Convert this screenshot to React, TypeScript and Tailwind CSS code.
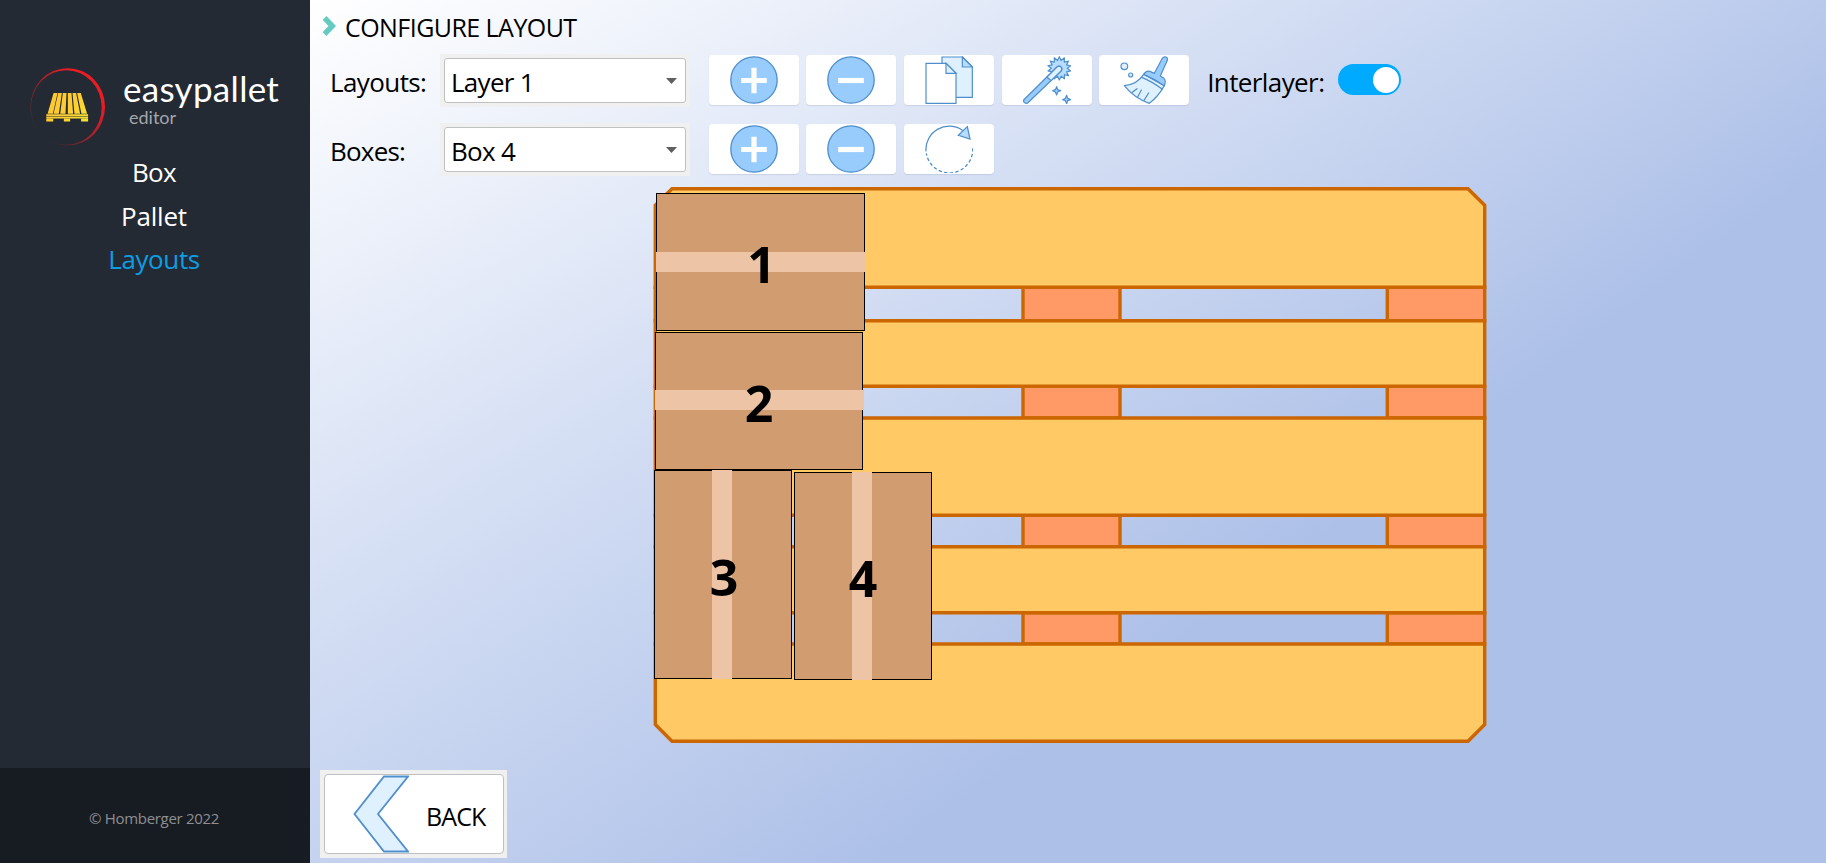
import React from 'react';

const STROKE = '#4f8fcc';

function Logo() {
  return (
    <svg viewBox="86 80 232 238" className="h-[79px] w-[77px] shrink-0" fill="none">
      <defs>
        <linearGradient id="ring" x1="110" y1="290" x2="270" y2="130" gradientUnits="userSpaceOnUse">
          <stop offset="0" stopColor="#ed1c24" stopOpacity="0" />
          <stop offset="0.45" stopColor="#ed1c24" stopOpacity="0.6" />
          <stop offset="0.95" stopColor="#ed1c24" />
        </linearGradient>
        <linearGradient id="wood" x1="150" y1="158" x2="250" y2="244" gradientUnits="userSpaceOnUse">
          <stop offset="0" stopColor="#fdc92f" />
          <stop offset="0.5" stopColor="#fdcb33" />
          <stop offset="1" stopColor="#fbe030" />
        </linearGradient>
      </defs>
      <path
        fill="url(#ring)"
        fillRule="evenodd"
        d="M90 200A112 116 0 1 1 315 200A112 116 0 1 1 90 200ZM92 202A106 112 0 1 1 305 202A106 112 0 1 1 92 202Z"
      />
      <g fill="url(#wood)">
        <path d="M160 158H172L158 221H142ZM174 158H185L176 221H160ZM188 158H199L196 221H180ZM203 158H214L219 221H203ZM217 158H228L240 221H223ZM231 158H242L261 221H244Z" />
        <path d="M138 222H264V228H138ZM138 230H264V235H138ZM138 236H159V244H138ZM191 236H210V244H191ZM243 236H264V244H243Z" />
      </g>
    </svg>
  );
}

function PlusIcon() {
  return (
    <svg viewBox="0 0 48 48" className="size-12">
      <circle cx="24" cy="24" r="23.2" fill="#98ccfd" stroke={STROKE} strokeWidth="1.3" />
      <path d="M24 11.7V37.3M11.2 24.5H36.8" stroke="#fff" strokeWidth="5.2" />
    </svg>
  );
}

function MinusIcon() {
  return (
    <svg viewBox="0 0 48 48" className="size-12">
      <circle cx="24" cy="24" r="23.2" fill="#98ccfd" stroke={STROKE} strokeWidth="1.3" />
      <path d="M11.2 24.5H36.8" stroke="#fff" strokeWidth="5.2" />
    </svg>
  );
}

function CopyIcon() {
  return (
    <svg viewBox="674 49 144 144" className="size-12" stroke={STROKE} strokeWidth="3.6">
      <path d="M725 52H787L816 81V173H725Z" fill="#dff0fe" />
      <path d="M786 52V82H816Z" fill="#b6dcfe" />
      <path d="M677 71H738L767 100V191H677Z" fill="#fff" />
      <path d="M737 71V101H767Z" fill="#dff0fe" />
    </svg>
  );
}

function RotateIcon() {
  return (
    <svg viewBox="674 255 144 144" className="size-12" fill="none" stroke={STROKE} strokeWidth="3.8">
      <path d="M677 334A70 70 0 0 1 788 272" />
      <path d="M817 325A70 70 0 0 1 678 340" strokeDasharray="10 7" />
      <path d="M801 260L809 297L774 286Z" fill="#b6dcfe" />
    </svg>
  );
}

const spikes = Array.from({ length: 28 }, (_, i) => {
  const a = (i * Math.PI) / 14 - Math.PI / 2;
  const r = i % 2 === 0 ? 35 : 24;
  return `${(205 + r * Math.cos(a)).toFixed(1)},${(86 + r * Math.sin(a)).toFixed(1)}`;
}).join(' ');

function WandIcon() {
  return (
    <svg viewBox="96 49 144 144" className="size-12" stroke={STROKE} strokeWidth="3.6" strokeLinejoin="round">
      <polygon points={spikes} fill="#b6dcfe" />
      <path d="M98 181L198 82Q204 77 210 82Q215 88 210 94L110 190Q105 193 101 189Q96 185 98 181Z" fill="#98ccfd" />
      <path d="M168 112L198 82Q204 77 210 82Q215 88 210 94L180 123Z" fill="#dff0fe" />
      <path d="M197 141L200 150L209 153L200 157L197 166L193 157L185 153L193 150Z" fill="#98ccfd" />
      <path d="M227 167L230 176L239 180L230 183L227 192L223 183L215 180L223 176Z" fill="#98ccfd" />
    </svg>
  );
}

function BroomIcon() {
  return (
    <svg viewBox="388 49 144 144" className="size-12" stroke={STROKE} strokeWidth="3.6" strokeLinejoin="round" strokeLinecap="round">
      <circle cx="401" cy="80" r="10" fill="#dff0fe" />
      <circle cx="420" cy="106" r="6" fill="#dff0fe" />
      <path d="M459 104Q440 134 401 138Q430 175 476 191Q502 172 521 138Z" fill="#dff0fe" />
      <path d="M459 104Q466 92 478 95L491 101L515 56Q519 50 526 52Q532 55 530 62L509 109L520 116Q527 123 521 138Q490 117 459 104Z" fill="#98ccfd" />
      <path d="M453 113Q486 126 515 149M439 147L425 158M452 151L441 172M474 160L460 182" fill="none" />
    </svg>
  );
}

function ToolButton({ label, children }: { label: string; children: React.ReactNode }) {
  return (
    <button
      aria-label={label}
      className="flex h-[50px] w-[90px] shrink-0 items-center justify-center rounded-[4px] bg-white shadow-[0_1px_1px_rgba(120,130,160,0.2)]"
    >
      {children}
    </button>
  );
}

function Combo({ value }: { value: string }) {
  return (
    <div className="h-[53px] w-[250px] shrink-0 bg-[#f0f0f0] p-1">
      <div className="flex h-[45px] items-center justify-between rounded-[3px] border border-[#c0c0c0] bg-white pl-[6px] pr-[8px]">
        <span className="pt-[3px] tracking-[-0.7px]">{value}</span>
        <svg viewBox="0 0 11 6" className="h-[6px] w-[11px]">
          <path d="M0 0H11L5.5 6Z" fill="#5f5f5f" />
        </svg>
      </div>
    </div>
  );
}

function Pallet() {
  const rows = [
    [287.3, 320.7],
    [386.3, 418],
    [515.3, 546.7],
    [612.7, 644],
  ];
  const blocks = [
    [655.3, 752],
    [1023, 1120],
    [1387.3, 1484.7],
  ];
  return (
    <svg viewBox="653 186 834 558" className="h-[558px] w-[834px]" stroke="#cc6600" strokeWidth="3.4">
      {rows.map(([top, bottom]) =>
        blocks.map(([left, right]) => (
          <rect key={`${top}-${left}`} x={left} y={top} width={right - left} height={bottom - top} fill="#ff9966" />
        )),
      )}
      <g fill="#ffc966">
        <path d="M672 188.7H1468L1484.7 205.3V287.3H655.3V205.3Z" />
        <path d="M655.3 320.7H1484.7V386.3H655.3Z" />
        <path d="M655.3 418H1484.7V515.3H655.3Z" />
        <path d="M655.3 546.7H1484.7V612.7H655.3Z" />
        <path d="M655.3 644H1484.7V724.5L1468 741.3H672L655.3 724.5Z" />
      </g>
    </svg>
  );
}

function Carton({ n, place, tape, text }: { n: number; place: string; tape: string; text: string }) {
  return (
    <div className={`absolute flex items-center justify-center ${place}`}>
      <div className="absolute inset-0 border border-black bg-[#d19c70]" />
      <div className={`absolute bg-[#edc4a5] ${tape}`} />
      <span className={`relative text-[50px] font-bold leading-none text-black ${text}`}>{n}</span>
    </div>
  );
}

export default function App() {
  return (
    <div className="flex h-[863px] w-[1826px] overflow-hidden font-['Open_Sans','Noto_Sans',sans-serif] text-[26px] leading-none text-black">
      <aside className="flex w-[310px] shrink-0 flex-col bg-[#232a33]">
        <div className="flex h-[151px] items-start pl-[29px] pt-[67px] font-['Lato',sans-serif]">
          <Logo />
          <div className="pl-[17px] pt-px">
            <div className="text-[35px] leading-[40px] tracking-[0.3px] text-white">easypallet</div>
            <div className="pl-[6px] pt-px text-[18px] leading-[16px] text-[#a3a6aa]">editor</div>
          </div>
        </div>
        <nav className="flex flex-col items-center pr-[2px] text-white">
          <a className="h-[43.7px] leading-[43.7px] tracking-[-0.6px]">Box</a>
          <a className="h-[43.7px] leading-[43.7px] tracking-[-0.2px]">Pallet</a>
          <a className="h-[43.7px] leading-[43.7px] tracking-[-0.4px] text-[#0d9de3]">Layouts</a>
        </nav>
        <footer className="mt-auto flex h-[95px] items-center justify-center bg-[#171b22] pr-[2px] pt-[6px] text-[15px] tracking-[-0.3px] text-[#8d8f92]">
          © Homberger 2022
        </footer>
      </aside>

      <main className="flex flex-1 flex-col bg-[conic-gradient(at_6000px_-3144px,#adc0e8_0deg,#adc0e8_233.58deg,#d1dcf3_237.58deg,#ffffff_242.35deg,#ffffff_360deg)]">
        <header className="flex h-[54px] items-center">
          <svg viewBox="0 0 13 20" className="ml-[13px] h-5 w-[13px] -translate-y-px">
            <path d="M1.5 2L9.3 10L1.5 18" fill="none" stroke="#65cbc2" strokeWidth="5.4" />
          </svg>
          <h1 className="pl-[9px] text-[25px] tracking-[-0.55px]">CONFIGURE LAYOUT</h1>
        </header>

        <div className="flex h-[53px] items-center">
          <span className="w-[130px] shrink-0 pl-[20px] pt-[3px] tracking-[-0.6px]">Layouts:</span>
          <Combo value="Layer 1" />
          <div className="flex gap-[7.6px] pb-px pl-[18.8px]">
            <ToolButton label="Add layout"><PlusIcon /></ToolButton>
            <ToolButton label="Remove layout"><MinusIcon /></ToolButton>
            <ToolButton label="Copy layout"><CopyIcon /></ToolButton>
            <ToolButton label="Auto fill"><WandIcon /></ToolButton>
            <ToolButton label="Clear layout"><BroomIcon /></ToolButton>
          </div>
          <span className="pl-[18px] pt-[3px] tracking-[-0.6px]">Interlayer:</span>
          <button aria-label="Interlayer" className="ml-[14px] flex h-[31px] w-[63px] items-center justify-end rounded-full bg-[#00aaff] pr-[2.5px] -translate-y-px">
            <span className="size-[26px] rounded-full bg-white" />
          </button>
        </div>

        <div className="mt-4 flex h-[53px] items-center">
          <span className="w-[130px] shrink-0 pl-[20px] pt-[3px] tracking-[-0.8px]">Boxes:</span>
          <Combo value="Box 4" />
          <div className="flex gap-[7.6px] pb-px pl-[18.8px]">
            <ToolButton label="Add box"><PlusIcon /></ToolButton>
            <ToolButton label="Remove box"><MinusIcon /></ToolButton>
            <ToolButton label="Rotate box"><RotateIcon /></ToolButton>
          </div>
        </div>

        <section className="relative ml-[343px] mt-[10px] h-[558px] w-[834px]">
          <Pallet />
          <Carton n={1} place="left-[3px] top-[7px] h-[138px] w-[209px]" tape="inset-x-0 top-[59px] h-5" text="top-[2px] left-px" />
          <Carton n={2} place="left-[2px] top-[146px] h-[138px] w-[208px]" tape="left-0 -right-px top-[58px] h-5" text="top-[2px]" />
          <Carton n={3} place="left-px top-[284px] h-[209px] w-[138px]" tape="inset-y-0 left-[58px] w-5" text="top-[2px] left-px" />
          <Carton n={4} place="left-[141px] top-[286px] h-[208px] w-[138px]" tape="inset-y-0 left-[58px] w-5" text="top-[2px]" />
        </section>

        <div className="ml-[10px] mt-[26px] h-[88px] w-[187px] bg-[#f0f0f0] p-1">
          <button className="flex h-[80px] w-[180px] items-center rounded-[4px] border border-[#c0c0c0] bg-white pl-[28px]">
            <svg viewBox="353 776 56 78" className="h-[78px] w-14 shrink-0">
              <path d="M384 777.5H408L378 815L408 852.5H384L354.5 815Z" fill="#dff0fe" stroke={STROKE} strokeWidth="1.8" />
            </svg>
            <span className="pl-[17px] pt-[4px] text-[25px] tracking-[-0.9px]">BACK</span>
          </button>
        </div>
      </main>
    </div>
  );
}
